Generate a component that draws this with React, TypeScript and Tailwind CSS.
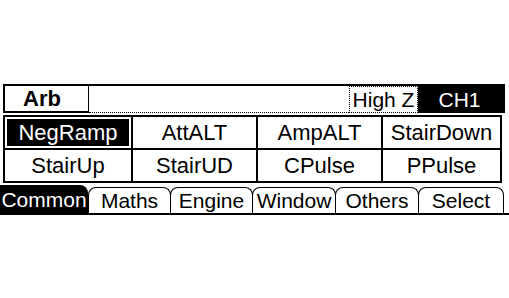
const cells = [
  { label: "NegRamp", active: true },
  { label: "AttALT" },
  { label: "AmpALT" },
  { label: "StairDown" },
  { label: "StairUp" },
  { label: "StairUD" },
  { label: "CPulse" },
  { label: "PPulse" },
];

const tabs = [
  { label: "Common", w: "w-[88px]", active: true },
  { label: "Maths", w: "w-[83px]" },
  { label: "Engine", w: "w-[83px]" },
  { label: "Window", w: "w-[84px]" },
  { label: "Others", w: "w-[84px]" },
  { label: "Select", w: "w-[86px]" },
];

export default function App() {
  return (
    <div className="w-[509px] h-[298px] bg-white text-black font-['Liberation_Sans',Arial,sans-serif] pt-[84px]">
      {/* header strip */}
      <div className="ml-[3px] w-[502px] h-[29px] border-t-2 border-black flex">
        <div className="w-[86px] border-l-2 border-r border-b-2 border-black flex items-center pl-[18px] text-[22px] font-bold leading-none">
          Arb
        </div>
        <div className="flex-1 border-b border-dotted border-black" />
        <div className="w-[69px] border border-dotted border-black flex items-center justify-center text-[21px] leading-none">
          High Z
        </div>
        <div className="w-[87px] bg-black text-white border-b border-dotted border-black flex items-center justify-center text-[21px] leading-none pr-[4px]">
          CH1
        </div>
      </div>

      {/* waveform grid */}
      <div className="ml-[3px] mt-[2px] w-[499px] border-2 border-black bg-black grid grid-cols-[126px_123px_123px_1fr] grid-rows-[31px_31px] gap-[2px]">
        {cells.map((c) => (
          <div key={c.label} className="bg-white p-[2px]">
            <div
              className={
                c.active
                  ? "h-full bg-black text-white flex items-center justify-center text-[22px] leading-none"
                  : "h-full flex items-center justify-center text-[22px] leading-none"
              }
            >
              {c.label}
            </div>
          </div>
        ))}
      </div>

      {/* menu tabs */}
      <div className="mt-[2px] flex h-[30px] border-b-2 border-black">
        {tabs.map((t, i) => (
          <div
            key={t.label}
            className={
              t.active
                ? `${t.w} bg-black text-white rounded-tr-[8px] flex items-center justify-center text-[21px] leading-none`
                : `${t.w} ${i > 1 ? "-ml-px" : ""} mt-[2px] border-t border-x border-black rounded-t-[8px] flex items-center justify-center text-[21px] leading-none`
            }
          >
            {t.label}
          </div>
        ))}
      </div>
    </div>
  );
}
